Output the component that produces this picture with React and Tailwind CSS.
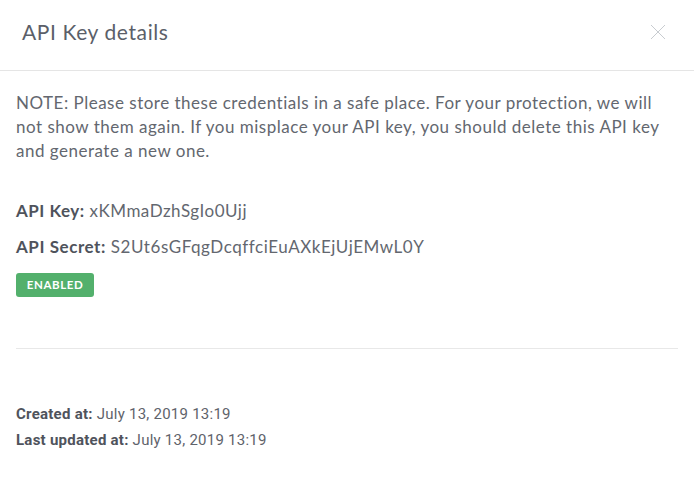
import React from "react";

export default function App() {
  return (
    <div className="w-[694px] h-[477px] bg-white font-['Lato','Open_Sans',sans-serif] text-[#63676f]">
      <div className="h-[71px] border-b border-[#e5e5e5] flex items-center justify-between pl-[22px] pr-[28px]">
        <h2 className="text-[21px] text-[#5b5f69] tracking-[0.6px] mt-[-6px]">API Key details</h2>
        <svg width="16" height="16" viewBox="0 0 16 16" className="mt-[-6px]">
          <path d="M1 1L15 15M15 1L1 15" stroke="#c8ccd0" strokeWidth="1" />
        </svg>
      </div>
      <div className="px-4">
        <p className="mt-[20px] text-[17px] leading-[24px] tracking-[0.5px] whitespace-nowrap">
          NOTE: Please store these credentials in a safe place. For your protection, we will
          <br />
          not show them again. If you misplace your API key, you should delete this API key
          <br />
          and generate a new one.
        </p>
        <p className="mt-[36px] text-[17px] leading-[24px] tracking-[0.5px]">
          <span className="font-bold text-[#4f535c]">API Key:</span> xKMmaDzhSgIo0Ujj
        </p>
        <p className="mt-[12px] text-[17px] leading-[24px] tracking-[0.55px]">
          <span className="font-bold text-[#4f535c]">API Secret:</span> S2Ut6sGFqgDcqffciEuAXkEjUjEMwL0Y
        </p>
        <div className="mt-[14px] w-[78px] h-[24px] rounded-[3px] bg-[#53b06c] flex items-center justify-center text-white text-[11.5px] font-bold tracking-[0.6px]">
          ENABLED
        </div>
        <div className="mt-[51px] border-t border-[#e8e8e8]" />
        <div className="mt-[52px] font-['Liberation_Sans_Narrow','Roboto',sans-serif] text-[15px] leading-[26px] tracking-[0.25px] text-[#5f636b]">
          <div>
            <span className="font-bold text-[#4f535c]">Created at:</span> July 13, 2019 13:19
          </div>
          <div>
            <span className="font-bold text-[#4f535c]">Last updated at:</span> July 13, 2019 13:19
          </div>
        </div>
      </div>
    </div>
  );
}
